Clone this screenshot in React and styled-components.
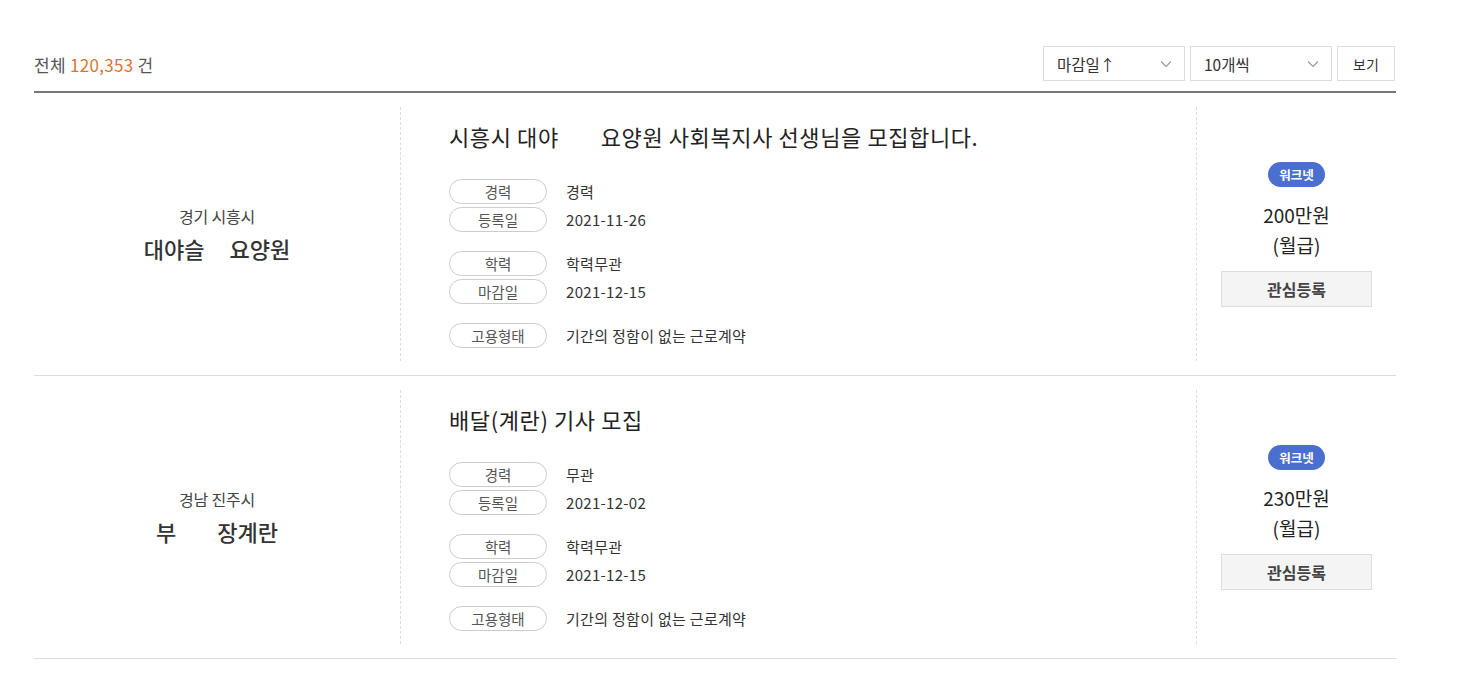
import React from "react";
import styled, { createGlobalStyle } from "styled-components";

const Global = createGlobalStyle`
  html, body { margin: 0; padding: 0; background: #fff; }
  body { font-family: "Noto Sans CJK KR", "Noto Sans", sans-serif; color: #333; }
`;

const Page = styled.div`
  width: 1362px;
  padding-left: 34px;
`;

const Header = styled.div`
  display: flex;
  align-items: center;
  justify-content: space-between;
  padding-top: 46px;
  padding-bottom: 10px;
  border-bottom: 2px solid #777;
`;

const Total = styled.div`
  font-size: 17px;
  color: #555;
  letter-spacing: 0.3px;
  margin-top: 2px;
`;

const Count = styled.span`
  color: #d9752f;
`;

const Controls = styled.div`
  display: flex;
  gap: 5px;
  margin-right: 1px;
`;

const Select = styled.div`
  box-sizing: border-box;
  width: 142px;
  height: 35px;
  border: 1px solid #ddd;
  display: flex;
  align-items: center;
  justify-content: space-between;
  padding: 0 12px 0 13px;
  font-size: 15.5px;
  color: #333;
`;

const ViewButton = styled.div`
  box-sizing: border-box;
  width: 58px;
  height: 35px;
  border: 1px solid #ddd;
  display: flex;
  align-items: center;
  justify-content: center;
  font-size: 14px;
  color: #333;
`;

const Row = styled.div`
  display: grid;
  grid-template-columns: 366px 796px 200px;
  border-bottom: 1px solid #ddd;
  min-height: 281px;
`;

const Side = styled.div`
  margin: 14px 0;
  display: flex;
  flex-direction: column;
  align-items: center;
  justify-content: center;
  text-align: center;
  ${(p) => (p.$divider ? "border-left: 1px dashed #ddd;" : "")}
`;

const Main = styled.div`
  margin: 14px 0;
  border-left: 1px dashed #ddd;
  padding: 14px 0 13px 48px;
`;

const Region = styled.div`
  font-size: 16px;
  color: #444;
  line-height: 20px;
  letter-spacing: -0.2px;
`;

const Company = styled.div`
  font-size: 22px;
  font-weight: 500;
  color: #333;
  line-height: 30px;
  margin-top: 7px;
`;

const Blank = styled.span`
  display: inline-block;
  width: ${(p) => p.$w}px;
`;

const Title = styled.div`
  font-size: 22px;
  color: #222;
  line-height: 30px;
  letter-spacing: 0.6px;
  margin-bottom: 28px;
`;

const Group = styled.div`
  display: flex;
  flex-direction: column;
  gap: 3px;
  & + & { margin-top: 19px; }
`;

const Info = styled.div`
  display: flex;
  align-items: center;
  gap: 19px;
`;

const Pill = styled.span`
  box-sizing: border-box;
  width: 98px;
  height: 25px;
  border: 1px solid #ccc;
  border-radius: 13px;
  display: inline-flex;
  align-items: center;
  justify-content: center;
  font-size: 14.5px;
  color: #555;
`;

const Value = styled.span`
  font-size: 15px;
  color: #333;
  letter-spacing: 0.3px;
`;

const Badge = styled.span`
  display: inline-flex;
  align-items: center;
  justify-content: center;
  width: 57px;
  height: 25px;
  border-radius: 13px;
  background: #4a6fcf;
  color: #fff;
  font-size: 12.5px;
  font-weight: 700;
`;

const Salary = styled.div`
  font-size: 19px;
  color: #222;
  line-height: 30px;
  &:first-of-type { margin-top: 13px; }
`;

const Interest = styled.div`
  box-sizing: border-box;
  margin-top: 11px;
  width: 151px;
  height: 36px;
  background: #f4f4f4;
  border: 1px solid #ddd;
  display: flex;
  align-items: center;
  justify-content: center;
  font-size: 16px;
  font-weight: 700;
  color: #444;
`;

const Chevron = () => (
  <svg width="12" height="8" viewBox="0 0 12 8" fill="none">
    <path d="M1 1.5L6 6.5L11 1.5" stroke="#999" strokeWidth="1.2" />
  </svg>
);

const jobs = [
  {
    region: "경기 시흥시",
    company: ["대야슬", 25, "요양원"],
    title: ["시흥시 대야", 42, "요양원 사회복지사 선생님을 모집합니다."],
    career: "경력",
    reg: "2021-11-26",
    edu: "학력무관",
    due: "2021-12-15",
    type: "기간의 정함이 없는 근로계약",
    pay: "200만원",
  },
  {
    region: "경남 진주시",
    company: ["부", 41, "장계란"],
    title: ["배달(계란) 기사 모집", 0, ""],
    career: "무관",
    reg: "2021-12-02",
    edu: "학력무관",
    due: "2021-12-15",
    type: "기간의 정함이 없는 근로계약",
    pay: "230만원",
  },
];

export default function App() {
  return (
    <Page>
      <Global />
      <Header>
        <Total>
          전체 <Count>120,353</Count> 건
        </Total>
        <Controls>
          <Select>
            <span>마감일↑</span>
            <Chevron />
          </Select>
          <Select>
            <span>10개씩</span>
            <Chevron />
          </Select>
          <ViewButton>보기</ViewButton>
        </Controls>
      </Header>
      {jobs.map((j, i) => (
        <Row key={i}>
          <Side>
            <Region>{j.region}</Region>
            <Company>
              {j.company[0]}
              <Blank $w={j.company[1]} />
              {j.company[2]}
            </Company>
          </Side>
          <Main>
            <Title>
              {j.title[0]}
              {j.title[1] > 0 && <Blank $w={j.title[1]} />}
              {j.title[2]}
            </Title>
            <Group>
              <Info>
                <Pill>경력</Pill>
                <Value>{j.career}</Value>
              </Info>
              <Info>
                <Pill>등록일</Pill>
                <Value>{j.reg}</Value>
              </Info>
            </Group>
            <Group>
              <Info>
                <Pill>학력</Pill>
                <Value>{j.edu}</Value>
              </Info>
              <Info>
                <Pill>마감일</Pill>
                <Value>{j.due}</Value>
              </Info>
            </Group>
            <Group>
              <Info>
                <Pill>고용형태</Pill>
                <Value>{j.type}</Value>
              </Info>
            </Group>
          </Main>
          <Side $divider>
            <Badge>워크넷</Badge>
            <Salary>{j.pay}</Salary>
            <Salary>(월급)</Salary>
            <Interest>관심등록</Interest>
          </Side>
        </Row>
      ))}
    </Page>
  );
}
